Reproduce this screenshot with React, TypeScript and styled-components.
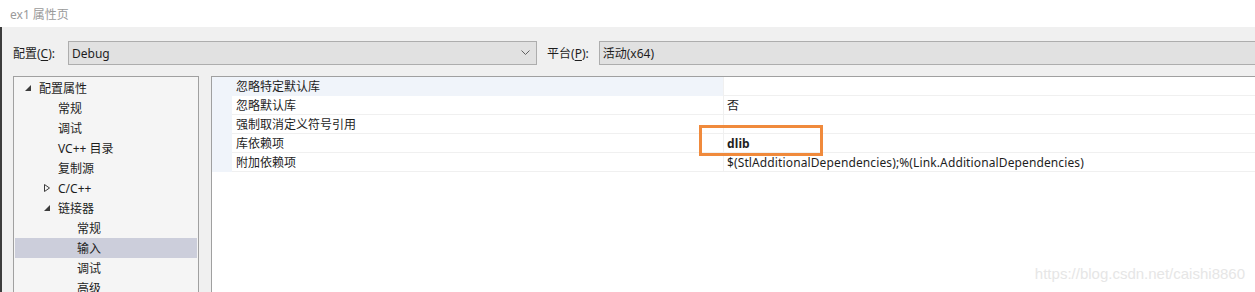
import React from 'react'
import styled, { createGlobalStyle } from 'styled-components'

const GlobalStyle = createGlobalStyle`
  html, body {
    margin: 0;
    padding: 0;
    background: #f0f0f0;
    overflow: hidden;
  }
  body {
    font-family: "Segoe UI", "Noto Sans", "Noto Sans CJK SC", sans-serif;
    font-size: 12px;
    color: #1e1e1e;
  }
`

const Window = styled.div`
  width: 1255px;
  height: 292px;
  display: flex;
  flex-direction: column;
  overflow: hidden;
`

const TitleBar = styled.div`
  height: 27px;
  flex: none;
  background: #ffffff;
  display: flex;
  align-items: center;
  padding-left: 10px;
  color: #9a9a9a;
  font-size: 12px;
`

const Body = styled.div`
  flex: 1;
  min-height: 0;
  display: flex;
  flex-direction: column;
  background: #f0f0f0;
  border-left: 2px solid #3c3c3c;
  padding: 14px 0 0 11px;
  position: relative;
`

const Toolbar = styled.div`
  display: flex;
  align-items: center;
  height: 24px;
`

const Label = styled.span<{ $gap: number }>`
  padding-right: ${(p) => p.$gap}px;
  white-space: nowrap;

  u {
    text-decoration: underline;
    text-underline-offset: 2px;
  }
`

const Combo = styled.div<{ $width?: number }>`
  box-sizing: border-box;
  height: 24px;
  ${(p) => (p.$width ? `width: ${p.$width}px; flex: none;` : 'flex: 1; margin-right: -2px;')}
  background: #e1e1e1;
  border: 1px solid #adadad;
  display: flex;
  align-items: center;
  padding-left: 3px;
`

const ComboText = styled.span`
  flex: 1;
`

const Chevron = styled.svg`
  width: 9px;
  height: 6px;
  margin-right: 6px;
`

const PlatformLabel = styled(Label)`
  margin-left: 10px;
`

const Panels = styled.div`
  flex: 1;
  min-height: 0;
  display: flex;
  gap: 12px;
  margin-top: 11px;
`

const Tree = styled.div`
  box-sizing: border-box;
  width: 186px;
  flex: none;
  background: #f5f5f5;
  border: 1px solid #a0a0a0;
  border-bottom: none;
  padding-top: 1px;
`

const TreeRow = styled.div<{ $level: number; $selected?: boolean }>`
  height: 20px;
  display: flex;
  align-items: center;
  margin: 0 1px;
  padding-left: ${(p) => 10 + p.$level * 19}px;
  background: ${(p) => (p.$selected ? '#cccedb' : 'transparent')};
  white-space: nowrap;
`

const Toggle = styled.span`
  width: 14px;
  height: 20px;
  flex: none;
  display: flex;
  align-items: center;
`

const Grid = styled.div`
  flex: 1;
  background: #ffffff;
  border-top: 1px solid #a0a0a0;
  border-left: 1px solid #a0a0a0;
  margin-right: -2px;
`

const PropRow = styled.div<{ $header?: boolean }>`
  display: grid;
  grid-template-columns: 20px 491px 1fr;
  height: 19px;
  position: relative;
  background: ${(p) => (p.$header ? '#f0f4fa' : 'transparent')};
`

const Gutter = styled.div`
  background: #f0f4fa;
`

const NameCell = styled.div<{ $header?: boolean }>`
  display: flex;
  align-items: center;
  padding-left: 4px;
  border-bottom: 1px solid ${(p) => (p.$header ? '#f0f4fa' : '#f0f0f0')};
  background: ${(p) => (p.$header ? '#f0f4fa' : '#ffffff')};
  white-space: nowrap;
`

const ValueCell = styled.div<{ $bold?: boolean }>`
  display: flex;
  align-items: center;
  padding-left: 3px;
  border-left: 1px solid #f0f0f0;
  border-bottom: 1px solid #f0f0f0;
  background: #ffffff;
  font-weight: ${(p) => (p.$bold ? 700 : 400)};
  white-space: nowrap;
  letter-spacing: 0.12px;
  position: relative;
`

const Highlight = styled.div`
  position: absolute;
  z-index: 2;
  left: -25px;
  top: -9px;
  width: 124px;
  height: 31px;
  box-sizing: border-box;
  border: 3px solid #f08a3c;
  pointer-events: none;
`

const Watermark = styled.div`
  position: absolute;
  right: 10px;
  bottom: 10px;
  font-family: "Liberation Sans", Arial, sans-serif;
  font-size: 15px;
  color: #e6e6e6;
`

const Expanded = () => (
  <svg width="6" height="6" viewBox="0 0 6 6">
    <polygon points="6,0 6,6 0,6" fill="#3c3c3c" />
  </svg>
)

const Collapsed = () => (
  <svg width="6" height="8" viewBox="0 0 6 8">
    <polygon points="0.5,0.5 5.5,4 0.5,7.5" fill="none" stroke="#3c3c3c" strokeWidth="1" />
  </svg>
)

type TreeItem = { text: string; level: number; toggle?: 'open' | 'closed'; selected?: boolean }

const treeItems: TreeItem[] = [
  { text: '配置属性', level: 0, toggle: 'open' },
  { text: '常规', level: 1 },
  { text: '调试', level: 1 },
  { text: 'VC++ 目录', level: 1 },
  { text: '复制源', level: 1 },
  { text: 'C/C++', level: 1, toggle: 'closed' },
  { text: '链接器', level: 1, toggle: 'open' },
  { text: '常规', level: 2 },
  { text: '输入', level: 2, selected: true },
  { text: '调试', level: 2 },
  { text: '高级', level: 2 },
]

type Prop = { name: string; value?: string; bold?: boolean; header?: boolean; boxed?: boolean }

const props: Prop[] = [
  { name: '忽略特定默认库', header: true },
  { name: '忽略默认库', value: '否' },
  { name: '强制取消定义符号引用' },
  { name: '库依赖项', value: 'dlib', bold: true, boxed: true },
  { name: '附加依赖项', value: '$(StlAdditionalDependencies);%(Link.AdditionalDependencies)' },
]

export default function App() {
  return (
    <Window>
      <GlobalStyle />
      <TitleBar>ex1 属性页</TitleBar>
      <Body>
        <Toolbar>
          <Label $gap={13}>
            配置(<u>C</u>):
          </Label>
          <Combo $width={469}>
            <ComboText>Debug</ComboText>
            <Chevron viewBox="0 0 9 6">
              <polyline points="0.5,0.5 4.5,4.5 8.5,0.5" fill="none" stroke="#606060" strokeWidth="1" />
            </Chevron>
          </Combo>
          <PlatformLabel $gap={10}>
            平台(<u>P</u>):
          </PlatformLabel>
          <Combo>
            <ComboText>活动(x64)</ComboText>
          </Combo>
        </Toolbar>
        <Panels>
          <Tree>
            {treeItems.map((item, i) => (
              <TreeRow key={i} $level={item.level} $selected={item.selected}>
                <Toggle>
                  {item.toggle === 'open' && <Expanded />}
                  {item.toggle === 'closed' && <Collapsed />}
                </Toggle>
                {item.text}
              </TreeRow>
            ))}
          </Tree>
          <Grid>
            {props.map((p, i) => (
              <PropRow key={i} $header={p.header}>
                <Gutter />
                <NameCell $header={p.header}>{p.name}</NameCell>
                <ValueCell $bold={p.bold}>
                  {p.value}
                  {p.boxed && <Highlight />}
                </ValueCell>
              </PropRow>
            ))}
          </Grid>
        </Panels>
        <Watermark>https://blog.csdn.net/caishi8860</Watermark>
      </Body>
    </Window>
  )
}
